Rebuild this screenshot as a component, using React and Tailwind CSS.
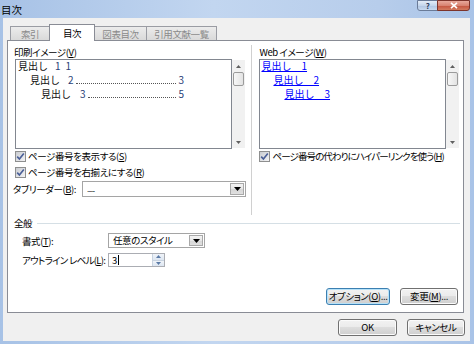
import React from "react";

const U = ({ children }) => <span className="underline">{children}</span>;

function Check() {
  return (
    <span className="w-[11px] h-[11px] border border-[#8e8f8f] bg-[linear-gradient(135deg,#c9ccd1,#f4f4f5)] flex items-center justify-center shrink-0">
      <svg width="9" height="9" viewBox="0 0 9 9">
        <path d="M1.2 4.6 L3.4 7 L7.8 1.4" stroke="#4a5f97" strokeWidth="1.6" fill="none" />
      </svg>
    </span>
  );
}

function VScroll() {
  return (
    <div className="w-[13px] my-px bg-[#f1f1f1] flex flex-col items-center shrink-0">
      <div className="h-[12px] w-full flex items-center justify-center">
        <svg width="5" height="3" viewBox="0 0 5 3"><path d="M0 3 L2.5 0 L5 3Z" fill="#606060" /></svg>
      </div>
      <div className="w-[11px] h-[14px] rounded-[2px] border border-[#9b9b9b] bg-[linear-gradient(90deg,#f7f7f7,#e3e3e3)]" />
      <div className="flex-1" />
      <div className="h-[12px] w-full flex items-center justify-center">
        <svg width="5" height="3" viewBox="0 0 5 3"><path d="M0 0 L5 0 L2.5 3Z" fill="#606060" /></svg>
      </div>
    </div>
  );
}

function DropBtn() {
  return (
    <div className="w-[14px] h-full border border-[#a9a9a9] bg-[linear-gradient(#f4f4f4,#e6e6e6_50%,#d6d6d6_51%,#e0e0e0)] flex items-center justify-center shrink-0">
      <svg width="7" height="4" viewBox="0 0 7 4"><path d="M0 0 H7 L3.5 4Z" fill="#000" /></svg>
    </div>
  );
}

function Btn({ children, focus, w }) {
  return (
    <div
      className={`${w} h-[17px] flex items-center justify-center whitespace-nowrap rounded-[3px] border ${
        focus ? "border-[#3c7fb1] shadow-[inset_0_0_0_1px_#b6e2f9]" : "border-[#707070] shadow-[inset_0_0_0_1px_#fbfbfb]"
      } bg-[linear-gradient(#f2f2f2,#ebebeb_49%,#dddddd_50%,#cfcfcf)] leading-none`}
    >
      {children}
    </div>
  );
}

function Tab({ children, w, selected }) {
  if (selected)
    return (
      <div className={`${w} h-[17px] -mb-px relative z-10 bg-white border border-b-0 border-[#898c95] flex items-center justify-center text-black -ml-px whitespace-nowrap`}>
        {children}
      </div>
    );
  return (
    <div className={`${w} h-[14px] bg-[linear-gradient(#ececec,#d9d9d9)] border border-b-0 border-[#9a9ca3] flex items-center justify-center text-[#8a8a8a] -ml-px first:ml-0 whitespace-nowrap`}>
      {children}
    </div>
  );
}

export default function App() {
  return (
    <div className="w-[474px] h-[344px] flex flex-col bg-[linear-gradient(90deg,#a7c2e6,#c2d6f0_45%,#b7cdeb_80%,#a9c3e7)] font-['Noto_Sans_CJK_JP',sans-serif] [font-feature-settings:'palt'] text-[9.5px] tracking-[-0.4px] leading-[12px] text-black overflow-hidden whitespace-nowrap">
      {/* title bar */}
      <div className="h-[18px] flex items-start shrink-0">
        <span className="ml-[1px] mt-[4px] text-[10.5px] tracking-normal leading-[12px] text-black">目次</span>
        <div className="ml-auto mr-[4px] flex">
          <div className="w-[21px] h-[11px] border border-[#6a7b98] rounded-bl-[3px] bg-[linear-gradient(#e3ecf7,#c5d6ec_50%,#aec4e2_51%,#c9daef)] flex items-center justify-center">
            <span className="text-[8px] leading-none font-bold text-[#2d3d5c]">?</span>
          </div>
          <div className="w-[33px] h-[11px] -ml-px border border-[#7d342b] rounded-br-[3px] bg-[linear-gradient(#e8a99c,#d88472_50%,#c4533f_51%,#d27b5f)] flex items-center justify-center">
            <svg width="8" height="7" viewBox="0 0 8 7">
              <path d="M1 0.8 L7 6.2 M7 0.8 L1 6.2" stroke="#fff" strokeWidth="1.6" />
            </svg>
          </div>
        </div>
      </div>

      {/* body */}
      <div className="flex-1 ml-[3px] mr-[4px] mb-[3px] bg-[#f0f0f0] flex flex-col pl-[4px] pt-[6px]">
        {/* tabs */}
        <div className="h-[16px] flex items-end pl-[3px]">
          <Tab w="w-[40px]">索引</Tab>
          <Tab w="w-[46px]" selected>目次</Tab>
          <Tab w="w-[53px]">図表目次</Tab>
          <Tab w="w-[71px]">引用文献一覧</Tab>
        </div>

        {/* panel */}
        <div className="w-[457px] h-[273px] border border-[#898c95] bg-white flex flex-col pl-[7px] pr-[3px]">
          {/* top section */}
          <div className="mt-[4px] h-[170px] flex">
            {/* left column */}
            <div className="w-[233px] flex flex-col">
              <div className="mt-px h-[12px] -ml-px">印刷イメージ(<U>V</U>)</div>
              <div className="mt-px h-[90px] flex">
                <div className="w-[217px] border border-[#828790] pl-[2px] text-[10px] tracking-normal leading-[14px] text-[#111] [font-feature-settings:normal]">
                  <div className="flex items-center mt-[-1px]">
                    <span>見出し</span>
                    <span className="ml-[7px] text-[#2b3f77]">1</span>
                    <span className="ml-[5px] text-[#2b3f77]">1</span>
                  </div>
                  <div className="flex w-[166px] pl-[12px]">
                    <span>見出し</span>
                    <span className="ml-[8px] text-[#2b3f77]">2</span>
                    <span className="flex-1 mx-[2px] mb-[3px] border-b border-dotted border-[#555]" />
                    <span className="text-[#2b3f77]">3</span>
                  </div>
                  <div className="flex w-[166px] pl-[23px]">
                    <span>見出し</span>
                    <span className="ml-[9px] text-[#2b3f77]">3</span>
                    <span className="flex-1 mx-[2px] mb-[3px] border-b border-dotted border-[#555]" />
                    <span className="text-[#2b3f77]">5</span>
                  </div>
                </div>
                <VScroll />
              </div>
              <div className="h-[14px] flex items-center gap-[2px]">
                <Check />
                <span>ページ番号を表示する(<U>S</U>)</span>
              </div>
              <div className="mt-[2px] h-[14px] flex items-center gap-[2px]">
                <Check />
                <span>ページ番号を右揃えにする(<U>R</U>)</span>
              </div>
              <div className="mt-[2px] h-[16px] flex items-center">
                <span className="w-[67px] -ml-[2px] mr-[2px]">タブリーダー(<U>B</U>):</span>
                <div className="w-[164px] h-[16px] border border-[#a5a5a5] flex items-stretch p-px">
                  <span className="flex-1 pl-[3px] text-[8px] leading-[12px] tracking-[-1px] text-[#333]">......</span>
                  <DropBtn />
                </div>
              </div>
            </div>

            {/* separator */}
            <div className="ml-[4px] w-px bg-[#d0d0d0]" />

            {/* right column */}
            <div className="pl-[7px] w-[208px] flex flex-col">
              <div className="mt-px h-[12px]">Web イメージ(<U>W</U>)</div>
              <div className="mt-px h-[90px] flex">
                <div className="w-[187px] border border-[#828790] pl-[1px] text-[10px] tracking-normal leading-[14px] text-[#0000ff] [font-feature-settings:normal]">
                  <div className="mt-[-1px]"><span className="underline">見出し　1</span></div>
                  <div className="pl-[12px]"><span className="underline">見出し　2</span></div>
                  <div className="pl-[23px]"><span className="underline">見出し　3</span></div>
                </div>
                <VScroll />
              </div>
              <div className="h-[14px] flex items-center gap-[2px]">
                <Check />
                <span className="tracking-[-0.9px]">ページ番号の代わりにハイパーリンクを使う(<U>H</U>)</span>
              </div>
            </div>
          </div>

          {/* 全般 */}
          <div className="mt-[2px] h-[12px] flex items-center">
            <span className="-ml-px">全般</span>
            <div className="ml-[5px] flex-1 h-px bg-[#d5dfe5]" />
          </div>
          <div className="mt-[4px] h-[15px] flex items-center pl-[7px]">
            <span className="w-[86px]">書式(<U>T</U>):</span>
            <div className="w-[97px] h-[15px] border border-[#a5a5a5] flex items-stretch p-px">
              <span className="flex-1 pl-[3px] leading-[11px]">任意のスタイル</span>
              <DropBtn />
            </div>
          </div>
          <div className="mt-[5px] h-[14px] flex items-center pl-[7px]">
            <span className="w-[86px] tracking-[-0.7px]">アウトライン レベル(<U>L</U>):</span>
            <div className="w-[57px] h-[14px] border border-[#abadb3] flex items-stretch">
              <span className="flex-1 pl-[3px] leading-[12px] flex items-center">
                3<span className="w-px h-[10px] bg-black ml-px" />
              </span>
              <div className="w-[12px] flex flex-col border-l border-[#c8d3e0]">
                <div className="flex-1 bg-[linear-gradient(#f0f4f9,#dde6f1)] flex items-center justify-center border-b border-[#c8d3e0]">
                  <svg width="5" height="3" viewBox="0 0 5 3"><path d="M0 3 L2.5 0 L5 3Z" fill="#5b7aa6" /></svg>
                </div>
                <div className="flex-1 bg-[linear-gradient(#f0f4f9,#dde6f1)] flex items-center justify-center">
                  <svg width="5" height="3" viewBox="0 0 5 3"><path d="M0 0 L5 0 L2.5 3Z" fill="#5b7aa6" /></svg>
                </div>
              </div>
            </div>
          </div>

          <div className="mt-auto mb-[7px] mr-[2px] flex justify-end gap-[10px]">
            <Btn w="w-[64px]" focus>オプション(<U>O</U>)...</Btn>
            <Btn w="w-[58px]">変更(<U>M</U>)...</Btn>
          </div>
        </div>

        {/* bottom buttons */}
        <div className="mt-[6px] w-[458px] flex justify-end gap-[10px]">
          <Btn w="w-[59px]">OK</Btn>
          <Btn w="w-[58px]">キャンセル</Btn>
        </div>
      </div>
    </div>
  );
}
